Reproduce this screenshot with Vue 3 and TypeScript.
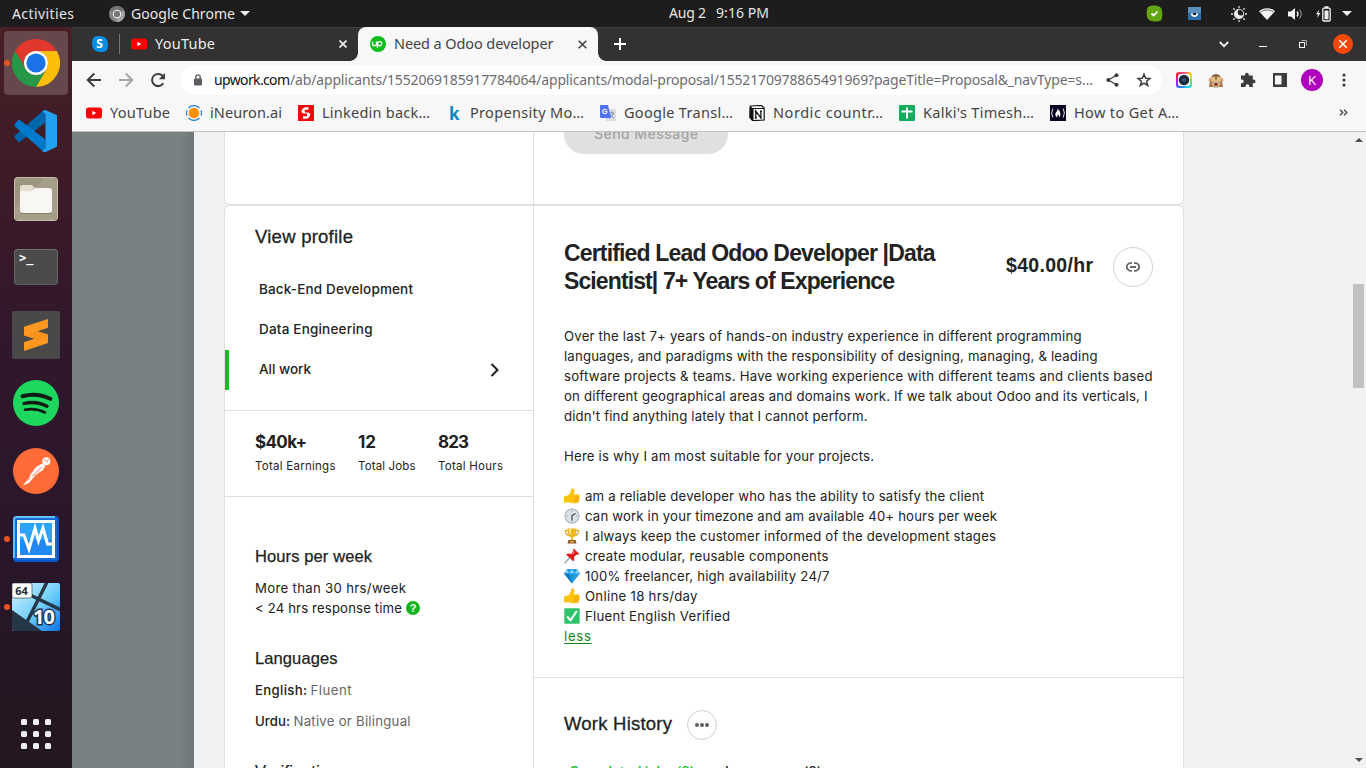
<script setup lang="ts">
import type { Directive } from 'vue'

/* Tracks a single line of text so that it fills the given width in pixels. */
const vFit: Directive<HTMLElement, number> = {
  mounted(el, binding) {
    const natural = el.getBoundingClientRect().width
    const count = (el.textContent ?? '').trim().length
    if (count > 1) {
      el.style.letterSpacing = `${(binding.value - natural) / (count - 1)}px`
    }
    el.style.width = `${binding.value}px`
  },
}

interface Line { text: string; width: number }
interface Bookmark extends Line { icon: string }
interface Perk extends Line { icon: string }

const bookmarks: Bookmark[] = [
  { icon: 'youtube', text: 'YouTube', width: 60 },
  { icon: 'ineuron', text: 'iNeuron.ai', width: 72 },
  { icon: 'linkedin', text: 'Linkedin back…', width: 108 },
  { icon: 'k', text: 'Propensity Mo…', width: 114 },
  { icon: 'translate', text: 'Google Transl…', width: 109 },
  { icon: 'notion', text: 'Nordic countr…', width: 110 },
  { icon: 'sheet', text: "Kalki's Timesh…", width: 111 },
  { icon: 'camp', text: 'How to Get A…', width: 105 },
]

const dock = ['chrome', 'code', 'files', 'terminal', 'sublime', 'spotify', 'postman', 'monitor', 'win']
const running = ['chrome', 'monitor', 'win']

const categories: Line[] = [
  { text: 'Back-End Development', width: 154 },
  { text: 'Data Engineering', width: 113.5 },
  { text: 'All work', width: 52 },
]

const stats = [
  { value: '$40k+', vw: 52, label: 'Total Earnings', lw: 80.5 },
  { value: '12', vw: 18, label: 'Total Jobs', lw: 57.5 },
  { value: '823', vw: 31, label: 'Total Hours', lw: 65 },
]

const bio: Line[] = [
  { text: 'Over the last 7+ years of hands-on industry experience in different programming', width: 517.5 },
  { text: 'languages, and paradigms with the responsibility of designing, managing, & leading', width: 533.5 },
  { text: 'software projects & teams. Have working experience with different teams and clients based', width: 588.5 },
  { text: 'on different geographical areas and domains work. If we talk about Odoo and its verticals, I', width: 583.5 },
  { text: "didn't find anything lately that I cannot perform.", width: 303.5 },
]

const perks: Perk[] = [
  { icon: 'thumb', text: 'am a reliable developer who has the ability to satisfy the client', width: 399 },
  { icon: 'clock', text: 'can work in your timezone and am available 40+ hours per week', width: 412 },
  { icon: 'trophy', text: 'I always keep the customer informed of the development stages', width: 411 },
  { icon: 'pin', text: 'create modular, reusable components', width: 243.5 },
  { icon: 'gem', text: '100% freelancer, high availability 24/7', width: 244.5 },
  { icon: 'thumb', text: 'Online 18 hrs/day', width: 112.5 },
  { icon: 'check', text: 'Fluent English Verified', width: 145 },
]

const grid = [0, 12, 24]
</script>

<template>
  <div class="desktop">
    <header class="topbar">
      <span v-fit="62" class="t activities">Activities</span>
      <svg class="app-icon" width="16" height="16" viewBox="0 0 16 16">
        <circle cx="8" cy="8" r="8" fill="#858585" />
        <path d="M8 8 15 4.5A8 8 0 0 1 8 16Z" fill="#a3a3a3" />
        <path d="M1 4.5A8 8 0 0 1 15 4.5H8Z" fill="#727272" />
        <circle cx="8" cy="8" r="4.2" fill="#f2f2f2" />
        <circle cx="8" cy="8" r="3.2" fill="#777" />
      </svg>
      <span v-fit="104" class="t">Google Chrome</span>
      <svg class="caret" width="10" height="5" viewBox="0 0 10 5"><path d="M0 0h10L5 5z" fill="#eee" /></svg>
      <span class="clock"><span v-fit="37" class="t">Aug 2</span><span v-fit="53" class="t">9:16 PM</span></span>
      <div class="tray">
        <svg width="17" height="17" viewBox="0 0 17 17">
          <path d="M5 .8Q8 0 11 .8q5 1 5.200 6 .6 3-.2 5.500.3 3.500-3.500 3.900-3 .8-6 0Q1 15.300.8 10.500.3 8 1 5.500.8 1.500 5 .8Z" fill="#63a615" />
          <path d="m5.500 8.500 2.200 2 3.800-4" fill="none" stroke="#fff" stroke-width="1.800" />
        </svg>
        <svg class="tray-blue" width="13" height="13" viewBox="0 0 13 13">
          <rect width="13" height="13" fill="#5b8fbd" /><rect y="6" width="13" height="7" fill="#2c6fae" />
          <path d="M2.800 6.500h7.400c0 4.500-7.400 4.500-7.400 0Z" fill="#fff" /><path d="M5 6h3v2H5z" fill="#222" />
        </svg>
        <svg class="tray-night" width="16" height="16" viewBox="0 0 16 16">
          <circle cx="8" cy="8" r="4.600" fill="#eee" /><circle cx="10" cy="6.200" r="3.200" fill="#1d1d1d" />
          <circle cx="8" cy="8" r="4.700" fill="none" stroke="#eee" stroke-width=".9" />
          <path d="M8 0v2M8 14v2M0 8h2M14 8h2M2.300 2.300l1.400 1.400M12.300 12.300l1.400 1.400M2.300 13.700l1.400-1.400M12.300 3.700l1.400-1.400" stroke="#ddd" stroke-width="1.300" />
        </svg>
        <svg class="tray-wifi" width="16" height="12" viewBox="0 0 16 12">
          <path d="M0 3.200C4.600-.9 11.400-.9 16 3.200L8 12Z" fill="#f2f2f2" /><path d="M1.700 4.100C5.500 1.300 10.500 1.300 14.300 4.100" fill="none" stroke="#666" stroke-width="1" />
        </svg>
        <svg class="tray-vol" width="15" height="12" viewBox="0 0 15 12">
          <path d="M0 3.500h3L7 0v12L3 8.500H0Z" fill="#f2f2f2" /><path d="M9 3.500q2 2.500 0 5" fill="none" stroke="#eee" stroke-width="1.400" />
          <path d="M11.500 1.500q3.500 4.500 0 9" fill="none" stroke="#888" stroke-width="1.200" />
        </svg>
        <svg class="tray-bat" width="15" height="16" viewBox="0 0 15 16">
          <path d="M3.300 3.500 0 8.300h2L1.200 12l3.200-4.900h-2Z" fill="#eee" /><rect x="6.800" y="2.200" width="7.400" height="12.800" rx="1" fill="none" stroke="#eee" stroke-width="1.300" />
          <path d="M8.500 4.500h4v8.800h-4zM8.500.3h4v2h-4z" fill="#eee" />
        </svg>
        <svg class="tray-caret" width="10" height="5" viewBox="0 0 10 5"><path d="M0 0h10L5 5z" fill="#eee" /></svg>
      </div>
    </header>

    <div class="main">
      <nav class="dock">
        <div v-for="name in dock" :key="name" class="dock-item" :class="{ active: name === 'chrome' }">
          <i v-if="running.includes(name)" class="dot"></i>
          <svg width="48" height="48" viewBox="0 0 48 48">
            <defs v-if="name === 'win'">
              <linearGradient id="winblue" x1="0" y1="0" x2="1" y2="1"><stop offset="0" stop-color="#d7f4ff" /><stop offset=".55" stop-color="#6fcdfa" /><stop offset="1" stop-color="#0874e8" /></linearGradient>
              <clipPath id="winclip"><rect width="48" height="48" rx="2" /></clipPath>
            </defs>
            <g v-if="name === 'chrome'">
              <path d="M3.200 12A24 24 0 0 1 44.800 12H24A12 12 0 0 0 13.600 30Z" fill="#e2372b" />
              <path d="M44.800 12A24 24 0 0 1 24 48L34.400 30A12 12 0 0 0 24 12Z" fill="#fdbd0b" />
              <path d="M24 48A24 24 0 0 1 3.200 12L13.600 30A12 12 0 0 0 34.400 30Z" fill="#279847" />
              <circle cx="24" cy="24" r="12" fill="#fff" /><circle cx="24" cy="24" r="9.600" fill="#1a73e8" />
            </g>
            <g v-else-if="name === 'code'">
              <path d="M3 31q-1-1.400 0-2.400L31 3.700 33.500 3v12.400L8 34.800q-1.200.7-2 0Z" fill="#0065a9" />
              <path d="M3 17q-1 1.400 0 2.400L31 44.300l2.500.7V32.600L8 13.200q-1.200-.7-2 0Z" fill="#007acc" />
              <path d="M33.500 3 45 8.200v31.600L33.500 45Q30 45 30.500 43.500L33.500 41V7L30.500 4.500Q31 3 33.500 3Z" fill="#22a0f2" />
            </g>
            <g v-else-if="name === 'files'">
              <rect x="2" y="2" width="44" height="44" rx="4" fill="#c2bba5" /><rect x="3" y="3" width="42" height="42" rx="3.500" fill="#9d9580" />
              <path d="M3 32 32 3H45V42q0 3-3 3H3Z" fill="#a69e89" />
              <path d="M8 13q0-3 3-3h9l3 3h-2v6H8Z" fill="#e4dfd0" />
              <path d="M8 16h11q2 0 3.500-3H37q3 0 3 3v19q0 3-3 3H11q-3 0-3-3Z" fill="#f8f7f4" /><path d="M9 37.800q1 .8 2 .8h26q1 0 2-.8" stroke="#786f5c" stroke-width=".8" fill="none" />
            </g>
            <g v-else-if="name === 'terminal'">
              <rect x="2" y="6" width="44" height="36" rx="4" fill="#727272" /><rect x="2.700" y="7" width="42.600" height="34.500" rx="3.500" fill="#4b4b4b" />
              <text x="7" y="18.500" class="prompt">&gt;_</text>
            </g>
            <g v-else-if="name === 'sublime'">
              <rect width="48" height="48" rx="2" fill="#494949" />
              <path d="M12 15.700 36 8v8.800L25.500 20.200 36 23.500V32L12 40v-8.700L22.500 27.800 12 24.500Z" fill="#ff9820" />
              <path d="m22.500 27.800 4.500 1.500 9-3.500v-2.300L25.500 20.200 12 24.500Z" fill="#f08a16" opacity=".35" />
            </g>
            <g v-else-if="name === 'spotify'">
              <circle cx="24" cy="24" r="23" fill="#1ed75f" />
              <g fill="none" stroke="#101c14" stroke-linecap="round"><path d="M10.500 17.300Q25 13.300 38.300 19.800" stroke-width="4" /><path d="M12 24.500Q24 21.500 35 27.300" stroke-width="3.300" /><path d="M13 30.800Q23.500 28.500 33 33.500" stroke-width="2.600" /></g>
            </g>
            <g v-else-if="name === 'postman'">
              <circle cx="24" cy="24" r="23" fill="#ff6c37" />
              <circle cx="34.300" cy="14.300" r="4" fill="#fff" /><path d="M32 12.500 36 15.500M34.500 14l3-2" stroke="#ff8c63" stroke-width="1" />
              <path d="M30 16.500 33.500 19 30 24 22 30 17 36 11 38.500 16 32 19 28 17 29.500 24 20Z" fill="#fff" />
              <path d="m20 29 10-9M22 29l8-5M15 34l3-3" stroke="#ff6c37" stroke-width=".8" />
            </g>
            <g v-else-if="name === 'monitor'">
              <rect x="1" y="1" width="46" height="46" rx="4" fill="#0b56c9" /><path d="M2 43V5q0-3 3-3h38" fill="none" stroke="#62c4ff" stroke-width="2" />
              <rect x="3" y="3" width="42" height="42" rx="2" fill="#1769d9" />
              <rect x="6.500" y="6.500" width="35" height="35" fill="#2ba4f7" stroke="#fff" stroke-width="3" /><path d="M8 25h32v15H8z" fill="#2388ef" />
              <path d="M8 20h4l5 14 6-21 3.500 13 4.500-13 4.500 16H41" fill="none" stroke="#fff" stroke-width="3" />
            </g>
            <g v-else clip-path="url(#winclip)">
              <rect width="48" height="48" fill="url(#winblue)" /><path d="M0 27 30 48H0Z" fill="#253646" />
              <path d="M35-1 13 43M14 10 49 27" stroke="#25384a" stroke-width="3.500" />
              <rect width="20" height="15" rx="2" fill="#fff" stroke="#333" stroke-width=".6" /><text x="3.200" y="12" class="bits">64</text>
              <text x="21" y="40.500" class="ten">10</text>
            </g>
          </svg>
        </div>
        <svg class="apps" width="30" height="30" viewBox="0 0 30 30">
          <template v-for="y in grid" :key="y"><rect v-for="x in grid" :key="x" :x="x" :y="y" width="6" height="6" rx="1.500" fill="#f0eff0" /></template>
        </svg>
      </nav>

      <section class="browser">
        <div class="tabs">
          <svg class="skype" width="16" height="16" viewBox="0 0 16 16">
            <path d="M5 0q3 0 5 .3 5.400 1.500 5.700 6 .5 3 0 5.500Q15 15.500 11.500 16q-3 .2-5.500-.3Q1 14.800.3 10 0 7.500.2 5 .7.600 5 0Z" fill="#078fe8" /><text x="4.300" y="12.400" class="skype-s">S</text>
          </svg>
          <i class="tab-sep"></i>
          <svg width="16" height="16" viewBox="0 0 16 16"><rect y="2.500" width="16" height="11" rx="2.500" fill="#f00" /><path d="m6.300 5.700 4 2.300-4 2.300Z" fill="#fff" /></svg>
          <span v-fit="60" class="t tab-yt">YouTube</span>
          <svg class="tab-x" width="8" height="8" viewBox="0 0 8 8"><path d="m.5.5 7 7m0-7-7 7" stroke="#eee" stroke-width="1.700" /></svg>
          <div class="tab">
            <svg width="16" height="16" viewBox="0 0 16 16">
              <circle cx="8" cy="8" r="8" fill="#0abf18" />
              <path d="M2.500 5.500v2.200a2 2 0 0 0 4 0V5.500q1.300 4.300 3.300 4.300a2.100 2.100 0 1 0-2-2.800L7.300 12" fill="none" stroke="#fff" stroke-width="1.300" />
            </svg>
            <span v-fit="159.5" class="t">Need a Odoo developer</span>
            <svg class="tab-close" width="9" height="9" viewBox="0 0 9 9"><path d="m.7.7 7.600 7.600m0-7.600L.7 8.300" stroke="#444" stroke-width="1.600" /></svg>
          </div>
          <svg class="plus" width="12" height="12" viewBox="0 0 12 12"><path d="M6 0v12M0 6h12" stroke="#fff" stroke-width="1.900" /></svg>
          <div class="wm">
            <svg width="10" height="7" viewBox="0 0 10 7"><path d="m.8 1 4.200 4.200L9.200 1" fill="none" stroke="#eee" stroke-width="1.900" /></svg>
            <svg class="wm-min" width="8" height="1" viewBox="0 0 8 1"><path d="M0 0h8v1H0z" fill="#fff" /></svg>
            <svg class="wm-max" width="8" height="8" viewBox="0 0 8 8"><path d="M2.500.5h5v5" fill="none" stroke="#aaa" /><rect x=".5" y="2.500" width="5" height="5" fill="none" stroke="#fff" /></svg>
            <svg class="wm-close" width="20" height="20" viewBox="0 0 20 20"><circle cx="10" cy="10" r="10" fill="#f2480b" /><path d="m6.300 6.300 7.400 7.400m0-7.400-7.400 7.400" stroke="#fff" stroke-width="1.500" /></svg>
          </div>
        </div>

        <div class="toolbar">
          <svg width="16" height="16" viewBox="0 0 16 16"><path d="M15 8H2M8.300 1.500 1.700 8l6.600 6.500" fill="none" stroke="#3c3c3c" stroke-width="1.900" /></svg>
          <svg width="16" height="16" viewBox="0 0 16 16"><path d="M1 8h13M7.700 1.500 14.300 8l-6.600 6.500" fill="none" stroke="#a5a5a5" stroke-width="1.900" /></svg>
          <svg class="reload" width="16" height="16" viewBox="0 0 16 16"><path d="M13.300 11.300A6.100 6.100 0 1 1 13 4.300" fill="none" stroke="#3c3c3c" stroke-width="2" /><path d="M15 1v6.200H8.800Z" fill="#3c3c3c" /></svg>
          <div class="omnibox">
            <svg width="8" height="12" viewBox="0 0 8 12"><rect y="4.500" width="8" height="7" rx="1" fill="#5b5d63" /><path d="M1.800 5V3a2.200 2.200 0 0 1 4.400 0v2" fill="none" stroke="#5b5d63" stroke-width="1.300" /></svg>
            <span v-fit="76" class="host">upwork.com</span><span v-fit="803" class="path">/ab/applicants/1552069185917784064/applicants/modal-proposal/1552170978865491969?pageTitle=Proposal&amp;_navType=s…</span>
            <svg class="share" width="13" height="14" viewBox="0 0 13 14"><path d="M10.500 2.300 2.300 7l8.200 4.700" fill="none" stroke="#3c3c3c" stroke-width="1.300" /><circle cx="10.500" cy="2.300" r="2" fill="#3c3c3c" /><circle cx="2.300" cy="7" r="2" fill="#3c3c3c" /><circle cx="10.500" cy="11.700" r="2" fill="#3c3c3c" /></svg>
            <svg class="star" width="16" height="16" viewBox="0 0 16 16"><path d="m8 2.200 1.600 4 4.300.3-3.300 2.800 1.100 4.200L8 11.200l-3.700 2.300 1.100-4.200L2.100 6.500l4.300-.3Z" fill="none" stroke="#3c3c3c" stroke-width="1.500" /></svg>
          </div>
          <div class="rainbow"><svg width="12" height="12" viewBox="0 0 12 12"><rect width="12" height="12" rx="2.500" fill="#fff" /><circle cx="6" cy="6" r="5.300" fill="#263344" /><circle cx="6" cy="6" r="3" fill="#31506e" stroke="#10161f" /></svg></div>
          <svg width="16" height="16" viewBox="0 0 16 16">
            <circle cx="2.500" cy="8" r="2" fill="#d9a678" /><circle cx="13.500" cy="8" r="2" fill="#d9a678" />
            <path d="M2.500 8a5.500 6 0 0 1 11 0v3a5.500 4.500 0 0 1-11 0Z" fill="#8a5f43" /><ellipse cx="8" cy="11.500" rx="4" ry="3.500" fill="#e5b98c" />
            <path d="M1 15Q1 9 5.500 7L7.500 9 4 11v4H1ZM15 15Q15 9 10.500 7L8.500 9l3.500 2v4h3Z" fill="#a87953" />
            <path d="M2.500 5.500 7 4.500 7.700 9 3 10ZM13.500 5.500 9 4.500 8.300 9l4.700 1Z" fill="#e3bd86" /><ellipse cx="8" cy="12.200" rx="1.800" ry="1.500" fill="#6c2d2a" />
          </svg>
          <svg width="16" height="16" viewBox="0 0 16 16"><path d="M1 3.500h4v-.8a1.900 1.900 0 0 1 3.800 0v.8h4v4h.8a1.900 1.900 0 0 1 0 3.800h-.8V15H9.200v-.9a1.800 1.800 0 0 0-3.600 0v.9H1v-3.800h.9a1.800 1.800 0 0 0 0-3.600H1Z" fill="#3c3c3c" /></svg>
          <svg width="16" height="16" viewBox="0 0 16 16"><path d="M1 1h14v14H1Zm2 2.500v9h6.500v-9Z" fill="#3c3c3c" fill-rule="evenodd" /></svg>
          <div class="avatar">K</div>
          <svg class="kebab" width="4" height="14" viewBox="0 0 4 14"><g fill="#3c3c3c"><circle cx="2" cy="2" r="1.600" /><circle cx="2" cy="7" r="1.600" /><circle cx="2" cy="12" r="1.600" /></g></svg>
        </div>

        <div class="bookmarks">
          <div v-for="b in bookmarks" :key="b.text" class="bookmark">
            <svg width="16" height="16" viewBox="0 0 16 16">
              <g v-if="b.icon === 'youtube'"><rect y="2.500" width="16" height="11" rx="2.500" fill="#f00" /><path d="m6.300 5.700 4 2.300-4 2.300Z" fill="#fff" /></g>
              <g v-else-if="b.icon === 'ineuron'"><circle cx="8" cy="8" r="5.300" fill="#ff9000" /><path d="M2.500 3Q8-1.800 13.500 3M2.500 13q5.500 4.800 11 0M1 5.500Q-.2 8 1 10.500M15 5.500q1.200 2.500 0 5" fill="none" stroke="#2580cf" stroke-width="1.300" /></g>
              <g v-else-if="b.icon === 'linkedin'"><rect width="16" height="16" fill="#f20808" /><path d="M10.500 3.500H8A3.200 3.200 0 0 0 4.800 6.700M5 12.500h2.700a3.200 3.200 0 0 0 3.200-3.200" fill="none" stroke="#fff" stroke-width="2.600" /><path d="M3.500 6h3.200L8 8.500H6Q3.500 8.500 3.500 6ZM12.200 10H9L8 7.500h1.700q2.500 0 2.500 2.500Z" fill="#fff" /></g>
              <text v-else-if="b.icon === 'k'" x="3" y="15" class="kaggle">k</text>
              <g v-else-if="b.icon === 'translate'"><rect x="6" y="4" width="10" height="12" fill="#dcdde0" /><path d="M8.500 8h6M11.500 6.500V8M13.500 8q-1 3.500-4 5M10 9q1 3 4 4" stroke="#7e92a3" fill="none" /><path d="M1 0h7l3 13H1q-1 0-1-1V1q0-1 1-1Z" fill="#5370ef" /><text x="1.800" y="9" class="gt">G</text></g>
              <g v-else-if="b.icon === 'notion'"><path d="M1.500 1 12.500.5 15.200 3v12l-11.500.7L1 12.500Z" fill="#fff" stroke="#111" stroke-width="1.200" /><path d="M1 1.500 4 4v11.500L1 12.500ZM4 3.500h11" fill="#111" stroke="#111" /><path d="M6.800 13V6.200L11.900 13V6.200M5.600 6.200h2M11 6.200h2M5.800 13h2" fill="none" stroke="#111" stroke-width="1.300" /></g>
              <g v-else-if="b.icon === 'sheet'"><rect width="16" height="16" rx="1" fill="#0fae5e" /><path d="M8 2.500v11M2.500 6.500h11" stroke="#fff" stroke-width="2" /></g>
              <g v-else><rect width="16" height="16" fill="#0b0420" /><path d="M2.800 3.500Q.5 8 2.800 12.500M13.200 3.500q2.300 4.500 0 9" fill="none" stroke="#fff" stroke-width=".9" /><path d="M7.500 3.500q3 2.500 3 5.500 0 2-1.700 3.500Q9.500 10.500 8 9.500q-1.200 1.500-.8 3Q5.300 11.500 5.300 9.500 5.300 8 6.700 6.500q1.300-1.500.8-3Z" fill="#fff" /></g>
            </svg>
            <span v-fit="b.width" class="t">{{ b.text }}</span>
          </div>
          <svg class="more" width="9" height="7" viewBox="0 0 9 7"><path d="m1 .7 2.800 2.800L1 6.300M5 .7l2.800 2.800L5 6.300" fill="none" stroke="#444" stroke-width="1.300" /></svg>
        </div>

        <div class="viewport">
          <div class="backdrop"></div>
          <div class="drawer">
            <div class="card card-top">
              <div class="side"></div>
              <div class="content"><button class="send"><span v-fit="104">Send Message</span></button></div>
            </div>
            <div class="card card-main">
              <aside class="side">
                <h3 class="view"><span v-fit="98">View profile</span></h3>
                <div v-for="(c, i) in categories" :key="c.text" class="cat" :class="{ current: i === 2 }">
                  <span v-fit="c.width">{{ c.text }}</span>
                  <svg v-if="i === 2" width="10" height="14" viewBox="0 0 10 14"><path d="m1.500 1 6 6-6 6" fill="none" stroke="#222" stroke-width="2.100" /></svg>
                </div>
                <div class="stats">
                  <div v-for="s in stats" :key="s.label" class="stat"><b><span v-fit="s.vw">{{ s.value }}</span></b><small><span v-fit="s.lw">{{ s.label }}</span></small></div>
                </div>
                <div class="facts">
                  <h4><span v-fit="117">Hours per week</span></h4>
                  <p><span v-fit="151">More than 30 hrs/week</span></p>
                  <p class="response"><span v-fit="147">&lt; 24 hrs response time</span><i class="help">?</i></p>
                  <h4 class="lang"><span v-fit="82.5">Languages</span></h4>
                  <p class="pair"><span v-fit="52" class="med">English:</span><span v-fit="41" class="muted">Fluent</span></p>
                  <p class="pair second"><span v-fit="35" class="med">Urdu:</span><span v-fit="117" class="muted">Native or Bilingual</span></p>
                  <h4 class="verif"><span v-fit="92">Verifications</span></h4>
                </div>
              </aside>
              <div class="content">
                <div class="head">
                  <h2><span v-fit="371.5">Certified Lead Odoo Developer |Data</span><br><span v-fit="331">Scientist| 7+ Years of Experience</span></h2>
                  <strong><span v-fit="87">$40.00/hr</span></strong>
                  <button class="link"><svg width="14" height="10" viewBox="0 0 14 10"><path d="M6 1.200H4.600a3.700 3.700 0 0 0 0 7.600H6M8 1.200h1.400a3.700 3.700 0 0 1 0 7.600H8M4 5h6" fill="none" stroke="#666" stroke-width="1.800" /></svg></button>
                </div>
                <div class="bio">
                  <p v-for="l in bio" :key="l.text"><span v-fit="l.width">{{ l.text }}</span></p>
                  <p class="why"><span v-fit="310">Here is why I am most suitable for your projects.</span></p>
                  <p v-for="p in perks" :key="p.text" class="perk">
                    <svg width="16" height="16" viewBox="0 0 16 16">
                      <g v-if="p.icon === 'thumb'"><path d="M0 8.500 4.500 7.300Q7.300 4.500 7.300 1.500 7.800-.2 9.300.6 11.300 2 9.800 6.500L14 6.300Q16 6.700 15.300 8.200q1 1.200 0 2.300.5 1.300-.5 2.200.2 1.900-1.500 2.200Q8 15.800 5 14.300L0 14.500Z" fill="#ffc20c" /><path d="M10.500 8.900H15M10.500 11h4.500M10.500 13.100h4" stroke="#e59600" stroke-width=".8" /></g>
                      <g v-else-if="p.icon === 'clock'"><circle cx="8" cy="8" r="7.700" fill="#b1bcc2" /><circle cx="8" cy="8" r="6.400" fill="#dce3e6" /><path d="M8 2.500v1M8 12.500v1M2.500 8h1M12.500 8h1" stroke="#71808a" /><path d="m11.500 5.500-3.500 2v5" fill="none" stroke="#394850" stroke-width="1.200" /></g>
                      <g v-else-if="p.icon === 'trophy'"><path d="M4 2.500H1.500q0 5 4.500 5.500M12 2.500h2.500q0 5-4.500 5.500" fill="none" stroke="#d8a21a" stroke-width="1.200" /><path d="M3.500.5h9q0 7.500-3.600 9v2.500H7.100V9.500Q3.500 8 3.500.5Z" fill="#edb824" /><path d="M5 1h2v6Q5 5 5 1Z" fill="#fff08e" /><path d="M4.500 12h7l1 3.500h-9Z" fill="#885329" /><path d="M6 13h4v1.500H6z" fill="#e5b73a" /></g>
                      <g v-else-if="p.icon === 'pin'"><path d="m6 9-5.500 6.500" stroke="#9faab0" stroke-width="1.300" /><path d="m9.500.5 6 5.500q-1.500 1-2.800.5L10 9q1 2.500-.5 4.500L2 6.500Q4.500 5 7 6l2.500-3Q8.500 1.500 9.500.5Z" fill="#df1c20" /><path d="m9 3-1.700 2.400 1.700 1L11 4Z" fill="#ff6661" /></g>
                      <g v-else-if="p.icon === 'gem'"><path d="M3 1h10l3 4.500-8 10-8-10Z" fill="#289be4" /><path d="m3 1 2 4.500H0ZM13 1l-2 4.500h5ZM8 1 5 5.500h6Z" fill="#79d5fb" /><path d="m5 5.500 3 10 3-10Z" fill="#159bdd" /><path d="M0 5.500h5l3 10Z" fill="#0878bd" /></g>
                      <g v-else><rect x=".3" y=".3" width="15.400" height="15.400" rx="1" fill="#30c46a" /><path d="m3.200 8.500 3.300 3.800 6.300-9.300" fill="none" stroke="#fff" stroke-width="2" /></g>
                    </svg>
                    <span v-fit="p.width">{{ p.text }}</span>
                  </p>
                  <p><a v-fit="27" class="less">less</a></p>
                </div>
                <div class="history">
                  <div class="history-head"><h3><span v-fit="108">Work History</span></h3><button class="dots"><i></i><i></i><i></i></button></div>
                  <div class="history-tabs"><span v-fit="126" class="on">Completed jobs (2)</span><span v-fit="97">In progress (2)</span></div>
                </div>
              </div>
            </div>
          </div>
          <div class="scrollbar">
            <svg width="8" height="4" viewBox="0 0 8 4"><path d="M0 4h8L4 0z" fill="#505050" /></svg>
            <i class="thumb"></i>
            <svg class="down" width="8" height="4" viewBox="0 0 8 4"><path d="M0 0h8L4 4z" fill="#505050" /></svg>
          </div>
        </div>
      </section>
    </div>
  </div>
</template>

<style>
body { margin: 0; overflow: hidden; }
</style>

<style scoped>
* { box-sizing: border-box; }
svg { display: block; flex: none; }
h2, h3, h4, p { margin: 0; font-weight: 400; }
button { padding: 0; font: inherit; }
span { white-space: nowrap; }
.desktop { width: 1366px; height: 768px; overflow: hidden; display: flex; flex-direction: column; font-family: "Liberation Sans", Arial, sans-serif; color: #222; }
.t { display: inline-block; flex: none; font: 14.5px/20px "Noto Sans", sans-serif; }
.topbar { display: flex; align-items: center; height: 27px; background: #1d1d1d; color: #e6e6e6; flex: none; }
.topbar .t { font-size: 14px; }
.topbar .activities { margin-left: 12px; }
.app-icon { margin: 0 6px 0 35px; }
.caret { margin-left: 5px; }
.clock { display: flex; gap: 10px; margin-left: 419px; }
.clock .t { margin-top: -1px; }
.tray { display: flex; align-items: center; margin-left: 377px; }
.tray-blue { margin-left: 25px; }
.tray-night { margin-left: 30px; }
.tray-wifi { margin-left: 12px; }
.tray-vol { margin-left: 13px; }
.tray-bat { margin-left: 13px; }
.tray-caret { margin-left: 11px; }
.main { display: flex; flex: 1; min-height: 0; }
.dock { display: flex; flex-direction: column; align-items: center; width: 72px; padding-top: 2px; flex: none; background: linear-gradient(#471f25, #3c1a28 22%, #31172d 42%, #29162a 72%, #23171e); }
.dock-item { position: relative; display: flex; align-items: center; justify-content: center; width: 64px; height: 64px; margin: 2px 0; border-radius: 4px; flex: none; }
.dock-item.active { background: #66484c; }
.dot { position: absolute; left: 0; top: 29px; width: 6px; height: 6px; border-radius: 50%; background: #e95420; }
.apps { margin-top: 78px; }
.prompt { font: bold 12px "DejaVu Sans Mono", monospace; fill: #fff; }
.bits { font: bold 11px "Noto Sans", sans-serif; fill: #252d35; }
.ten { font: bold 20px "Noto Sans", sans-serif; letter-spacing: -1px; fill: #fff; stroke: #20334a; stroke-width: 3px; paint-order: stroke; }
.browser { display: flex; flex-direction: column; width: 1294px; flex: none; background: #f7f7f7; }
.tabs { display: flex; align-items: center; height: 34px; padding-bottom: 1px; border-top: 1px solid #434142; background: #333132; color: #ececec; flex: none; }
.tabs .t { margin-top: -3px; }
.skype { margin-left: 20px; }
.skype-s { font: bold 12px "Noto Sans", sans-serif; fill: #fff; }
.tab-sep { width: 1px; height: 20px; margin: 0 11px; background: #767475; }
.tab-yt { margin-left: 8px; }
.tab-x { margin-left: 124px; }
.tab { position: relative; display: flex; align-items: center; width: 240px; height: 34px; margin-left: 11px; padding-left: 12px; border-radius: 8px 8px 0 0; background: #f7f7f7; color: #444; flex: none; }
.tab::before, .tab::after { content: ""; position: absolute; bottom: 0; width: 8px; height: 8px; }
.tab::before { left: -8px; background: radial-gradient(circle at 0 0, transparent 7.5px, #f7f7f7 8px); }
.tab::after { right: -8px; background: radial-gradient(circle at 100% 0, transparent 7.5px, #f7f7f7 8px); }
.tab .t { margin-left: 8px; }
.tab-close { margin-left: 24px; }
.plus { margin-left: 16px; }
.wm { display: flex; align-items: center; margin-left: 593px; }
.wm-min { margin: 5px 0 0 30px; }
.wm-max { margin-left: 32px; }
.wm-close { margin-left: 26px; }
.toolbar { display: flex; align-items: center; gap: 16px; height: 38px; padding-left: 14px; flex: none; }
.reload { margin-right: -2px; }
.omnibox { display: flex; align-items: center; width: 982px; height: 30px; margin-right: -3px; padding-left: 14px; border-radius: 15px; background: #fff; flex: none; }
.host, .path { display: inline-block; font: 14px/20px "Noto Sans", sans-serif; flex: none; }
.host { margin-left: 12px; color: #111; }
.path { color: #6c6c6f; }
.share { margin-left: 13px; }
.star { margin-left: 17px; }
.rainbow { display: flex; align-items: center; justify-content: center; width: 16px; height: 16px; margin-left: 1px; border-radius: 3px; background: conic-gradient(#ff4ba8, #ffd900, #66e650, #13ddec, #267cff, #a719ff, #f22, #ff4ba8); flex: none; }
.avatar { width: 22px; height: 22px; margin: 0 -3px; border-radius: 50%; background: #b100bd; color: #fff; font: 13px/22px "Noto Sans", sans-serif; text-align: center; flex: none; }
.kebab { margin-left: 6px; }
.bookmarks { display: flex; align-items: center; gap: 16px; height: 33px; padding: 0 0 5px 14px; border-bottom: 1px solid #c3c3c0; color: #444; flex: none; }
.bookmark { display: flex; align-items: center; gap: 8px; height: 20px; }
.bookmark .t { margin-top: -2px; }
.kaggle { font: bold 17px "Open Sans", sans-serif; fill: #0e86c0; }
.gt { font: bold 7.5px "Liberation Sans", sans-serif; fill: #fff; }
.more { margin-left: 144px; }
.viewport { display: flex; height: 636px; overflow: hidden; flex: none; }
.backdrop { width: 122px; background: linear-gradient(90deg, #798183 108px, #6e7678); flex: none; }
.drawer { width: 1157px; padding-left: 30px; background: #f0f1f3; flex: none; }
.card { display: flex; width: 960px; border: 1px solid #e0e0e0; background: #fff; }
.card-top { height: 73px; border-top: 0; border-radius: 0 0 6px 6px; }
.card-main { height: 620px; border-radius: 6px 6px 0 0; }
.side { width: 309px; border-right: 1px solid #e0e0e0; flex: none; }
.content { flex: 1; min-width: 0; }
.card span { display: inline-block; flex: none; }
.send { width: 164px; height: 40px; margin: -18px 0 0 30px; padding-bottom: 2px; border: 0; border-radius: 20px; background: #e0e0e0; color: #a4a4a4; font-family: Inter, sans-serif; font-size: 14px; font-weight: 500; display: block; }
.view { height: 64px; padding: 18px 0 0 30px; font-size: 18.5px; line-height: 26px; -webkit-text-stroke: .3px; }
.cat { display: flex; align-items: center; justify-content: space-between; height: 40px; padding: 0 33px 2px 34px; font-family: Inter, sans-serif; font-size: 13.5px; font-weight: 500; line-height: 20px; }
.cat svg { margin-top: 2px; }
.cat.current { padding-left: 30px; border-left: 4px solid #14bf24; }
.stats { display: flex; height: 87px; margin-top: 20px; padding: 20px 0 0 30px; gap: 22.5px; border-top: 1px solid #e0e0e0; border-bottom: 1px solid #e0e0e0; }
.stat b { display: block; height: 23px; font-family: Inter, sans-serif; font-size: 17px; font-weight: 700; line-height: 22px; }
.stat small { display: block; margin-top: 2px; font-family: Inter, sans-serif; font-size: 11.5px; line-height: 20px; }
.facts { padding: 46px 0 0 30px; font-family: Inter, sans-serif; font-size: 13.2px; line-height: 20px; }
.facts h4 { height: 35px; font-family: "Liberation Sans", sans-serif; font-size: 16.5px; line-height: 26px; -webkit-text-stroke: .25px; }
.facts p { display: flex; height: 20px; }
.facts .response { align-items: center; gap: 4px; }
.help { width: 14px; height: 14px; border-radius: 50%; background: #12b51e; color: #fff; font: bold 11px/14px "Liberation Sans", sans-serif; text-align: center; }
.facts .lang { margin-top: 27px; }
.pair { gap: 3.5px; }
.second { margin-top: 11px; }
.med { font-weight: 500; }
.muted { color: #656565; }
.facts .verif { margin-top: 27px; }
.head { display: flex; height: 120px; padding: 33px 0 0 30px; }
.head h2 { width: 442px; font-size: 23px; line-height: 28px; font-weight: 700; white-space: nowrap; }
.head strong { width: 107px; padding-top: 13px; font-size: 19.5px; line-height: 26px; }
.link { display: flex; align-items: center; justify-content: center; width: 40px; height: 40px; margin-top: 8px; border: 1px solid #d2d2d2; border-radius: 50%; background: #fff; }
.bio { height: 351px; padding-left: 30px; font-family: Inter, sans-serif; font-size: 13.2px; line-height: 20px; }
.bio p { height: 20px; display: flex; align-items: center; }
.bio .why { margin: 20px 0; }
.perk { gap: 5px; }
.less { display: inline-block; color: #14861e; text-decoration: underline; text-underline-offset: 2px; }
.history { border-top: 1px solid #e0e0e0; padding: 32px 0 0 30px; }
.history-head { display: flex; align-items: center; height: 30px; gap: 15px; }
.history h3 { margin-top: -2px; font-size: 18.5px; line-height: 26px; -webkit-text-stroke: .3px; }
.dots { display: flex; align-items: center; justify-content: center; gap: 1px; width: 30px; height: 30px; border: 1px solid #cfcfcf; border-radius: 50%; background: #fff; }
.dots i { width: 4px; height: 4px; border-radius: 50%; background: #5e5e5e; }
.history-tabs { display: flex; gap: 30px; padding: 21px 0 0 5px; font-family: Inter, sans-serif; font-size: 14px; font-weight: 500; line-height: 22px; }
.on { color: #14bf24; }
.scrollbar { display: flex; flex-direction: column; align-items: center; width: 15px; padding: 6px 0; background: #f1f1f1; flex: none; }
.thumb { width: 11px; height: 104px; margin-top: 142px; background: #c1c1c1; }
.down { margin-top: auto; }
</style>
